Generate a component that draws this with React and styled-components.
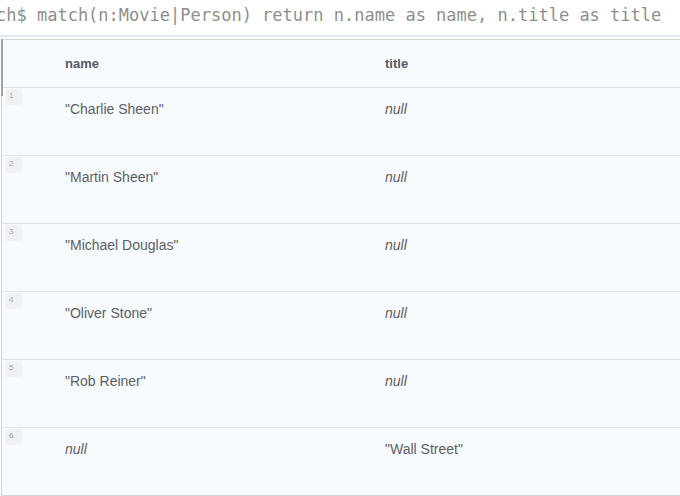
import React from "react";
import styled, { createGlobalStyle } from "styled-components";

const Global = createGlobalStyle`
  html, body { margin: 0; padding: 0; background: #ffffff; }
  body { width: 680px; height: 496px; overflow: hidden; font-family: "Liberation Sans", Arial, sans-serif; }
`;

const Frame = styled.div`
  position: relative;
  width: 680px;
  height: 496px;
  overflow: hidden;
  display: flex;
  flex-direction: column;
`;

const Command = styled.div`
  height: 37px;
  box-sizing: border-box;
  padding-top: 5px;
  margin-left: -4px;
  font-family: "DejaVu Sans Mono", "Liberation Mono", monospace;
  font-size: 17px;
  line-height: 20px;
  color: #8e8e8e;
  white-space: nowrap;
  border-bottom: 2px solid #dde8f2;
`;

const Table = styled.div`
  margin-top: 2px;
  margin-left: 1px;
  border-top: 1px solid #d2d5d8;
  border-left: 1px solid #d3d6d9;
  border-bottom: 1px solid #d3d6d9;
  background: #f7fbff;
  display: grid;
  grid-template-columns: 43px 320px 1fr;
  width: 720px;
`;

const HeadCell = styled.div`
  height: 48px;
  box-sizing: border-box;
  padding: 16px 0 0 20px;
  font-size: 13px;
  font-weight: bold;
  color: #555a60;
  border-bottom: 1px solid #dde2e8;
`;

const Cell = styled.div`
  height: ${(p) => (p.$last ? "67px" : "68px")};
  box-sizing: border-box;
  padding: 13px 0 0 20px;
  font-size: 14px;
  color: #5b5f64;
  font-style: ${(p) => (p.$null ? "italic" : "normal")};
  border-bottom: ${(p) => (p.$last ? "none" : "1px solid #dde2e8")};
`;

const NumCell = styled.div`
  height: ${(p) => (p.$last ? "67px" : "68px")};
  box-sizing: border-box;
  padding: 1px 0 0 4px;
  border-bottom: ${(p) => (p.$last ? "none" : "1px solid #dde2e8")};
`;

const NumBox = styled.div`
  width: 16px;
  height: 16px;
  box-sizing: border-box;
  padding: 2px 0 0 3px;
  background: #eff1f3;
  font-size: 8px;
  color: #a4a8ad;
`;

const Thumb = styled.div`
  position: absolute;
  left: 1px;
  top: 39px;
  width: 2px;
  height: 57px;
  background: #9da1a5;
`;

const rows = [
  ['"Charlie Sheen"', null],
  ['"Martin Sheen"', null],
  ['"Michael Douglas"', null],
  ['"Oliver Stone"', null],
  ['"Rob Reiner"', null],
  [null, '"Wall Street"'],
];

export default function App() {
  return (
    <>
      <Global />
      <Frame>
        <Command>ch$ match(n:Movie|Person) return n.name as name, n.title as title</Command>
        <Table>
          <HeadCell />
          <HeadCell>name</HeadCell>
          <HeadCell>title</HeadCell>
          {rows.map(([name, title], i) => {
            const last = i === rows.length - 1;
            return (
              <React.Fragment key={i}>
                <NumCell $last={last}>
                  <NumBox>{i + 1}</NumBox>
                </NumCell>
                <Cell $last={last} $null={name === null}>
                  {name === null ? "null" : name}
                </Cell>
                <Cell $last={last} $null={title === null}>
                  {title === null ? "null" : title}
                </Cell>
              </React.Fragment>
            );
          })}
        </Table>
        <Thumb />
      </Frame>
    </>
  );
}
